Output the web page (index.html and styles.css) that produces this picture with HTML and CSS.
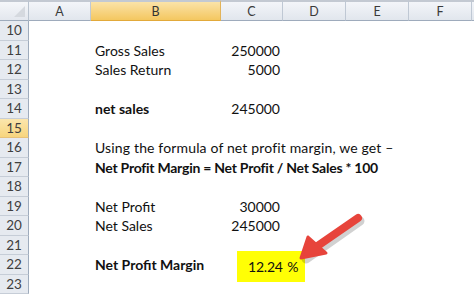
FILE: index.html
```html
<!DOCTYPE html>
<html lang="en">
<head>
    <meta charset="UTF-8">
    <title>Net Profit Margin</title>
    <link rel="stylesheet" href="styles.css">
</head>
<body>

    <div class="sheet">
        <!-- cabeçalho de colunas -->
        <div class="corner"><span class="tri"></span></div>
        <div class="colhead">A</div>
        <div class="colhead active">B</div>
        <div class="colhead">C</div>
        <div class="colhead">D</div>
        <div class="colhead">E</div>
        <div class="colhead">F</div>
        <div class="colhead last"></div>

        <div class="rowhead">10</div><div class="row"></div>

        <div class="rowhead">11</div>
        <div class="row"><span class="label">Gross Sales</span><span class="num">250000</span></div>

        <div class="rowhead">12</div>
        <div class="row"><span class="label">Sales Return</span><span class="num">5000</span></div>

        <div class="rowhead">13</div><div class="row"></div>

        <div class="rowhead">14</div>
        <div class="row"><span class="label bold">net sales</span><span class="num">245000</span></div>

        <div class="rowhead active">15</div><div class="row"></div>

        <div class="rowhead">16</div>
        <div class="row"><span class="long">Using the formula of net profit margin, we get –</span></div>

        <div class="rowhead">17</div>
        <div class="row"><span class="long bold">Net Profit Margin = Net Profit / Net Sales * 100</span></div>

        <div class="rowhead">18</div><div class="row"></div>

        <div class="rowhead">19</div>
        <div class="row"><span class="label">Net Profit</span><span class="num">30000</span></div>

        <div class="rowhead">20</div>
        <div class="row"><span class="label">Net Sales</span><span class="num">245000</span></div>

        <div class="rowhead">21</div><div class="row"></div>

        <div class="rowhead">22</div>
        <div class="row"><span class="label bold">Net Profit Margin</span></div>

        <div class="rowhead">23</div><div class="row"></div>

        <!-- destaque do resultado -->
        <div class="result">12.24 %</div>
        <svg class="arrow" width="80" height="70" viewBox="0 0 80 70">
            <path d="M 6 46 L 60 8" stroke="rgba(0,0,0,0.18)" stroke-width="9" stroke-linecap="round" transform="translate(2,3)"/>
            <path d="M 60 8 L 18 37" stroke="#e7443b" stroke-width="8" stroke-linecap="round"/>
            <polygon points="3,48 10,27 28,43" fill="#e7443b" stroke="#e7443b" stroke-width="3" stroke-linejoin="round"/>
        </svg>
    </div>

</body>
</html>
```

FILE: styles.css
```css
body {
    margin: 0;
    background-color: #ffffff;
    font-family: "Lato", "Open Sans", sans-serif;
    overflow: hidden;
}

.sheet {
    position: relative;
    display: grid;
    grid-template-columns: 29px 62px 130px 62px 63px 63px 63px 1fr;
    grid-template-rows: 21px repeat(14, 19.5px);
    width: 474px;
    height: 296px;
}

.corner {
    position: relative;
    background: linear-gradient(#f5f7fa, #e3e7ee);
    border-top: 2px solid #c3c9d2;
    border-right: 1px solid #b9c3cf;
    border-bottom: 1px solid #9eabbc;
}

.tri {
    position: absolute;
    right: 3px;
    bottom: 3px;
    width: 0;
    height: 0;
    border-left: 11px solid transparent;
    border-bottom: 11px solid #d5d9df;
}

.colhead {
    display: flex;
    align-items: center;
    justify-content: center;
    background: linear-gradient(#f3f5f9, #e1e6ed);
    border-top: 2px solid #c3c9d2;
    border-right: 1px solid #bfc8d4;
    border-bottom: 1px solid #9eabbc;
    color: #3a3a3a;
    font-size: 12.5px;
}

.colhead.active {
    background: linear-gradient(#fbe3a8, #f4c760);
    border-bottom-color: #e2a93a;
    border-right-color: #e2b35a;
    color: #333;
}

.colhead.last {
    border-right: none;
}

.rowhead {
    display: flex;
    align-items: center;
    justify-content: center;
    background: #e6eaf0;
    border-right: 1px solid #9eabbc;
    border-bottom: 1px solid #c6cdd7;
    color: #3f3f3f;
    font-size: 13.5px;
    box-sizing: border-box;
}

.rowhead.active {
    background: linear-gradient(#fbe6ad, #f7d57e);
    border-bottom-color: #e7c27a;
}

.row {
    grid-column: 2 / 9;
    display: grid;
    grid-template-columns: 62px 130px 62px 1fr;
    align-items: center;
    font-size: 14px;
    color: #111;
    white-space: nowrap;
}

.label {
    grid-column: 2;
    padding-left: 4px;
}

.long {
    grid-column: 2 / 5;
    padding-left: 4px;
    letter-spacing: 0.15px;
}

.num {
    grid-column: 3;
    text-align: right;
    padding-right: 3px;
}

.bold {
    font-weight: bold;
}

.long.bold {
    letter-spacing: -0.25px;
}

.result {
    position: absolute;
    left: 237px;
    top: 251px;
    width: 68px;
    height: 31px;
    box-sizing: border-box;
    padding-left: 11px;
    display: flex;
    align-items: center;
    background-color: #ffff05;
    font-size: 14px;
    word-spacing: 1px;
    letter-spacing: -0.2px;
    color: #111;
}

.arrow {
    position: absolute;
    left: 298px;
    top: 210px;
    overflow: visible;
}
```
